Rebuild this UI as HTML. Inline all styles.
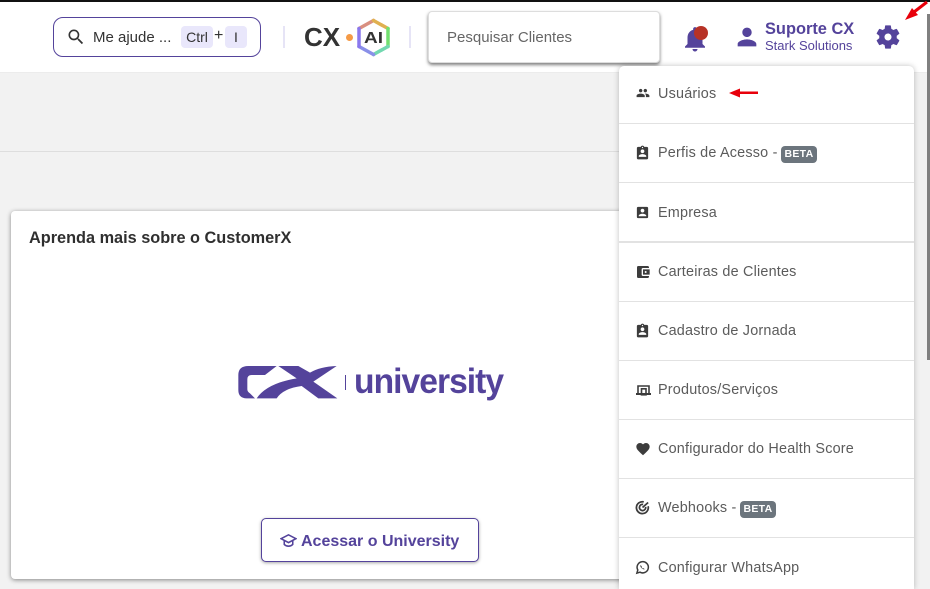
<!DOCTYPE html>
<html lang="pt"><head><meta charset="utf-8"><title>CustomerX</title>
<style>
*{box-sizing:border-box}
html,body{margin:0;padding:0;width:930px;height:589px;overflow:hidden;background:#f2f2f2;font-family:"Liberation Sans",sans-serif}
#root{position:absolute;left:0;top:0;width:930px;height:589px;overflow:hidden;background:#f2f2f2}
.a{position:absolute;white-space:nowrap}
#top{position:absolute;left:0;top:0;width:930px;height:72px;background:#fff}
#blk{position:absolute;left:0;top:0;width:930px;height:2px;background:#111}
#help{left:53px;top:17px;width:208px;height:40px;border:1px solid #54439b;border-radius:10px;background:#fff}
.kbd{background:#e9e7fb;border-radius:4px;height:22px;font-size:14px;line-height:22px;text-align:center;color:#333}
.div{width:2px;height:22px;background:#e6e4f6;top:26px}
#search{left:428px;top:11px;width:232px;height:52px;background:#fff;border-radius:4px;border:1px solid #ddd;box-shadow:0 2px 3px rgba(0,0,0,.5);font-size:15px;line-height:52px;padding-left:18px;color:#666}
#card{left:11px;top:211px;width:640px;height:368px;background:#fff;border-radius:4px;box-shadow:0 1px 5px rgba(0,0,0,.45)}
#btn{left:261px;top:518px;width:218px;height:44px;background:#fff;border:1px solid #54439b;border-radius:5px;box-shadow:0 1px 3px rgba(0,0,0,.35);color:#54439b;font-weight:700;font-size:16px;line-height:44px;padding-left:39px}
#menu{left:619px;top:66px;width:295px;height:523px;background:#fff;border-radius:5px 5px 0 0;box-shadow:0 0 6px rgba(0,0,0,.25)}
.hr{left:619px;width:295px;height:1px;background:#e2e2e2}
.t{left:658px;font-size:14.4px;letter-spacing:.2px;color:#5b5b5b;line-height:20px;margin-top:-1px}
.ic{left:635px;width:16px;height:16px}
.b{background:#6c757d;color:#fff;font-size:10.5px;font-weight:700;letter-spacing:.3px;border-radius:4px;line-height:17px;width:36px;height:17px;text-align:center}
</style></head><body><div id="root">
<div id="top"></div>
<div id="blk"></div>
<div class="a" style="left:0;top:72px;width:930px;height:1px;background:#ececec"></div>
<div class="a" style="left:0;top:151px;width:619px;height:1px;background:#dedede"></div>

<div id="help" class="a"></div>
<svg class="a" style="left:66px;top:27px" width="20" height="20" viewBox="0 0 24 24" fill="#333"><path d="M15.5 14h-.79l-.28-.27A6.47 6.47 0 0 0 16 9.5 6.5 6.5 0 1 0 9.5 16c1.61 0 3.09-.59 4.23-1.57l.27.28v.79l5 4.99L20.49 19l-4.99-5zm-6 0C7.01 14 5 11.99 5 9.5S7.01 5 9.5 5 14 7.01 14 9.5 11.99 14 9.5 14z"/></svg>
<div class="a" style="left:93px;top:28px;font-size:15px;line-height:20px;color:#333">Me ajude ...</div>
<div class="a kbd" style="left:181px;top:26px;width:32px">Ctrl</div>
<div class="a" style="left:214px;top:26px;font-size:16px;line-height:20px;color:#333">+</div>
<div class="a kbd" style="left:225px;top:26px;width:22px">I</div>
<div class="a div" style="left:283px"></div>

<div class="a" style="left:304px;top:21px;font-size:26px;line-height:32px;font-weight:700;color:#333">CX</div>
<div class="a" style="left:345.500px;top:33.500px;width:7px;height:7px;border-radius:50%;background:#f59a46"></div>
<svg class="a" style="left:356px;top:18px" width="35" height="39" viewBox="0 0 35 39" fill="none" stroke-width="3.500" stroke-linecap="round">
<path d="M3 10.500L17.500 2.500" stroke="#d98f80"/><path d="M17.500 2.500L32 10.500" stroke="#e0b050"/><path d="M32 10.500V28.500" stroke="#72e070"/><path d="M32 28.500L17.500 36.500" stroke="#72d8b0"/><path d="M17.500 36.500L3 28.500" stroke="#8a90e8"/><path d="M3 28.500V10.500" stroke="#8a78ee"/>
<text x="17.500" y="25" text-anchor="middle" font-family="Liberation Sans" font-weight="700" font-size="15.500" fill="#333" stroke="none" textLength="19" lengthAdjust="spacingAndGlyphs">AI</text></svg>
<div class="a div" style="left:409px"></div>

<div id="search" class="a">Pesquisar Clientes</div>

<svg class="a" style="left:680px;top:24px" width="30" height="30" viewBox="0 0 24 24" fill="#54439b"><path d="M12 22c1.100 0 2-.9 2-2h-4c0 1.100.9 2 2 2zm6-6v-5c0-3.070-1.630-5.640-4.500-6.320V4c0-.83-.67-1.500-1.500-1.500s-1.500.67-1.500 1.500v.68C7.640 5.360 6 7.920 6 11v5l-2 2v1h16v-1l-2-2z"/></svg>
<div class="a" style="left:694px;top:26px;width:14px;height:14px;border-radius:50%;background:#b73226"></div>
<svg class="a" style="left:733px;top:23px" width="28" height="28" viewBox="0 0 24 24" fill="#54439b"><path d="M12 12c2.210 0 4-1.790 4-4s-1.790-4-4-4-4 1.790-4 4 1.790 4 4 4zm0 2c-2.670 0-8 1.340-8 4v2h16v-2c0-2.660-5.330-4-8-4z"/></svg>
<div class="a" style="left:765px;top:19px;font-size:16.400px;line-height:20px;font-weight:700;color:#54439b">Suporte CX</div>
<div class="a" style="left:765px;top:37px;font-size:13px;line-height:17px;color:#54439b">Stark Solutions</div>
<svg class="a" style="left:874px;top:23px" width="28" height="28" viewBox="0 0 24 24" fill="#54439b"><path fill-rule="evenodd" d="M19.430 12.980c.04-.32.07-.64.07-.98s-.03-.66-.07-.98l2.110-1.650c.19-.15.24-.42.12-.64l-2-3.460c-.12-.22-.39-.3-.61-.22l-2.490 1c-.52-.4-1.080-.73-1.690-.98l-.38-2.650A.488.488 0 0 0 14 2h-4c-.25 0-.46.18-.49.42l-.38 2.650c-.61.25-1.170.59-1.690.98l-2.490-1c-.23-.09-.49 0-.61.22l-2 3.460c-.13.22-.07.49.12.64l2.110 1.650c-.04.32-.07.65-.07.98s.03.66.07.98l-2.110 1.650c-.19.15-.24.42-.12.64l2 3.460c.12.22.39.3.61.22l2.490-1c.52.4 1.080.73 1.690.98l.38 2.650c.03.24.24.42.49.42h4c.25 0 .46-.18.49-.42l.38-2.650c.61-.25 1.170-.59 1.690-.98l2.490 1c.23.09.49 0 .61-.22l2-3.460c.12-.22.07-.49-.12-.64l-2.110-1.650zM12 15c-1.650 0-3-1.350-3-3s1.350-3 3-3 3 1.350 3 3-1.350 3-3 3z"/></svg>
<svg class="a" style="left:900px;top:0" width="30" height="24" viewBox="0 0 30 24"><path d="M27 2L14 12" stroke="#e8000b" stroke-width="3"/><path d="M5 20L18 15L12 8Z" fill="#e8000b"/></svg>
<div class="a" style="left:927px;top:14px;width:3px;height:346px;background:#808080"></div>

<div id="card" class="a"></div>
<div class="a" style="left:29px;top:228px;font-size:16.300px;line-height:20px;font-weight:700;color:#2f2f2f">Aprenda mais sobre o CustomerX</div>
<svg class="a" style="left:220px;top:350px" width="130" height="65" viewBox="0 0 390 195" fill="#54439b"><path d="M85 48H170L135 75H95Q82 75 82 88V118Q82 125 90 130L105 145H80Q55 145 55 120V75Q55 48 85 48Z"/><path d="M175 48H235L270 68Q300 50 350 48L280 95L352 145H295L245 108Q190 115 170 145H110Q140 100 230 85Z"/><rect x="375" y="75" width="3" height="45"/></svg>
<div class="a" style="left:354px;top:360px;font-size:35px;line-height:44px;font-weight:700;color:#54439b;letter-spacing:-1px;transform-origin:0 0;transform:scaleX(.96)">university</div>

<div id="btn" class="a"><span style="position:relative;top:1px">Acessar o University</span></div>
<svg class="a" style="left:280px;top:532px" width="17" height="17" viewBox="0 0 24 24" fill="none" stroke="#54439b" stroke-width="2.200"><path d="M1.500 9.500L12 4l10.500 5.500L12 15z"/><path d="M6 12v5.500c2 2 4 2.500 6 2.500s4-.5 6-2.500V12"/></svg>

<div id="menu" class="a"></div>
<div class="a hr" style="top:123px"></div><div class="a hr" style="top:182px"></div><div class="a hr" style="top:241px;height:2px"></div><div class="a hr" style="top:301px"></div><div class="a hr" style="top:360px"></div><div class="a hr" style="top:419px"></div><div class="a hr" style="top:478px"></div><div class="a hr" style="top:537px"></div>

<svg class="a" style="left:636px;top:86px" width="14" height="14" viewBox="0 0 24 24" fill="#3c3c3c"><path d="M16 11c1.660 0 2.990-1.340 2.990-3S17.660 5 16 5s-3 1.340-3 3 1.340 3 3 3zm-8 0c1.660 0 2.990-1.340 2.990-3S9.660 5 8 5 5 6.340 5 8s1.340 3 3 3zm0 2c-2.330 0-7 1.170-7 3.500V19h14v-2.500C15 14.170 10.330 13 8 13zm8 0c-.29 0-.62.02-.97.05 1.160.84 1.970 1.970 1.970 3.450V19h6v-2.500c0-2.330-4.670-3.500-7-3.500z"/></svg>
<div class="a t" style="top:85px">Usuários</div>
<svg class="a" style="left:729px;top:88px" width="30" height="10" viewBox="0 0 30 10"><path d="M0 5L11 0.500V3.500H29V6H11V9.500Z" fill="#e8000b"/></svg>

<svg class="a" style="left:635px;top:145px" width="15" height="15" viewBox="0 0 24 24" fill="#3c3c3c"><path d="M19 3h-4.180C14.400 1.840 13.300 1 12 1s-2.400.84-2.820 2H5c-1.100 0-2 .9-2 2v16c0 1.100.9 2 2 2h14c1.100 0 2-.9 2-2V5c0-1.100-.9-2-2-2zm-7 0c.55 0 1 .45 1 1s-.45 1-1 1-1-.45-1-1 .45-1 1-1zm0 4c1.660 0 3 1.340 3 3s-1.340 3-3 3-3-1.340-3-3 1.340-3 3-3zm6 12H6v-1.400c0-2 4-3.100 6-3.100s6 1.100 6 3.100V19z"/></svg>
<div class="a t" style="top:144px">Perfis de Acesso -</div><div class="a b" style="left:781px;top:146px">BETA</div>

<svg class="a" style="left:635px;top:205px" width="15" height="15" viewBox="0 0 24 24" fill="#3c3c3c"><path d="M3 5v14a2 2 0 0 0 2 2h14a2 2 0 0 0 2-2V5a2 2 0 0 0-2-2H5a2 2 0 0 0-2 2zm12 4c0 1.660-1.340 3-3 3s-3-1.340-3-3 1.340-3 3-3 3 1.340 3 3zm-9 8c0-2 4-3.100 6-3.100s6 1.100 6 3.100v1H6v-1z"/></svg>
<div class="a t" style="top:204px">Empresa</div>

<svg class="a ic" style="top:264px" viewBox="0 0 24 24" fill="#3c3c3c"><path d="M21 18v1c0 1.100-.9 2-2 2H5a2 2 0 0 1-2-2V5a2 2 0 0 1 2-2h14c1.100 0 2 .9 2 2v1h-9a2 2 0 0 0-2 2v8a2 2 0 0 0 2 2h9zm-9-2h10V8H12v8zm4-2.500c-.83 0-1.500-.67-1.500-1.500s.67-1.500 1.500-1.500 1.500.67 1.500 1.500-.67 1.500-1.500 1.500z"/></svg>
<div class="a t" style="top:263px">Carteiras de Clientes</div>

<svg class="a" style="left:635px;top:323px" width="15" height="15" viewBox="0 0 24 24" fill="#3c3c3c"><path d="M19 3h-4.180C14.400 1.840 13.300 1 12 1s-2.400.84-2.820 2H5c-1.100 0-2 .9-2 2v16c0 1.100.9 2 2 2h14c1.100 0 2-.9 2-2V5c0-1.100-.9-2-2-2zm-7 0c.55 0 1 .45 1 1s-.45 1-1 1-1-.45-1-1 .45-1 1-1zm0 4c1.660 0 3 1.340 3 3s-1.340 3-3 3-3-1.340-3-3 1.340-3 3-3zm6 12H6v-1.400c0-2 4-3.100 6-3.100s6 1.100 6 3.100V19z"/></svg>
<div class="a t" style="top:322px">Cadastro de Jornada</div>

<svg class="a" style="left:635px;top:381px" width="17" height="16" viewBox="0 0 17 16" fill="none" stroke="#3c3c3c" stroke-width="1.600"><path d="M3 12V5h11v7"/><path d="M1 13h15" stroke-width="2"/><rect x="6.500" y="7.800" width="4.500" height="6"/></svg>
<div class="a t" style="top:381px">Produtos/Serviços</div>

<svg class="a ic" style="top:441px" viewBox="0 0 24 24" fill="#3c3c3c"><path d="M12 21.350l-1.450-1.320C5.400 15.360 2 12.280 2 8.500 2 5.420 4.420 3 7.500 3c1.740 0 3.410.81 4.500 2.090C13.090 3.810 14.760 3 16.500 3 19.580 3 22 5.420 22 8.500c0 3.780-3.400 6.860-8.550 11.540L12 21.350z"/></svg>
<div class="a t" style="top:440px">Configurador do Health Score</div>

<svg class="a" style="left:635px;top:500px" width="15" height="15" viewBox="0 0 24 24" fill="none" stroke="#3c3c3c" stroke-width="2.800"><path d="M21 10a9.500 9.500 0 1 1-7-7"/><path d="M17 11a5 5 0 1 1-4-4"/><path d="M12 12L21 4"/></svg>
<div class="a t" style="top:499px">Webhooks -</div><div class="a b" style="left:740px;top:501px">BETA</div>

<svg class="a" style="left:635px;top:560px" width="15" height="15" viewBox="0 0 24 24" fill="none" stroke="#3c3c3c" stroke-width="2.400"><path d="M3 21l1.500-5A9 9 0 1 1 8 19.500z"/><path d="M9 8c-1 1-.5 3 1.500 5s4 2.500 5 1.500l-2-1.500-1 .5-2-2 .5-1z" fill="#3c3c3c" stroke="none"/></svg>
<div class="a t" style="top:559px">Configurar WhatsApp</div>
</div></body></html>
